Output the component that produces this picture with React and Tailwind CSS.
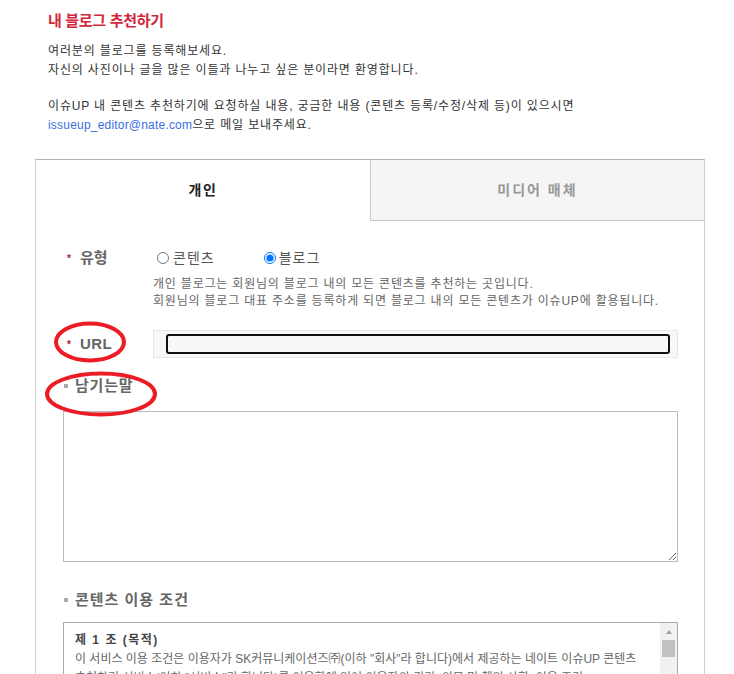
import React from 'react';

const font = { fontFamily: '"Liberation Sans", "Noto Sans CJK KR", sans-serif' };

const App = () => {
  return (
    <div className="relative w-[734px] h-[674px] overflow-hidden bg-white" style={font}>
      <div className="ml-[35px] w-[670px]">
        {/* INTRO */}
        <div className="pl-[13px] pt-[10px]">
          <h1 className="text-[15px] leading-[22px] font-bold text-[#d0283c] tracking-[-0.3px]">내 블로그 추천하기</h1>
          <div className="mt-[10px] text-[12px] leading-[18.5px] text-[#333] tracking-[0.85px]">
            <p>여러분의 블로그를 등록해보세요.</p>
            <p>자신의 사진이나 글을 많은 이들과 나누고 싶은 분이라면 환영합니다.</p>
            <p className="mt-[18px]">이슈UP 내 콘텐츠 추천하기에 요청하실 내용, 궁금한 내용 (콘텐츠 등록/수정/삭제 등)이 있으시면</p>
            <p><a className="text-[#3b6fe0] tracking-[0.2px]">issueup_editor@nate.com</a>으로 메일 보내주세요.</p>
          </div>
        </div>

        {/* FORM BOX */}
        <div className="mt-[25px] border border-[#cfcfcf] border-t-[#b4b4b4] h-[600px]">
          <div className="grid grid-cols-2 h-[61px]">
            <div className="flex items-center justify-center text-[14px] font-bold text-[#222] tracking-[1.5px]">개인</div>
            <div className="flex items-center justify-center bg-[#f5f5f5] border-l border-b border-[#c8c8c8] text-[14px] font-bold text-[#999] tracking-[2px]">미디어 매체</div>
          </div>

          <div className="pl-[27px] pr-[26px]">
            {/* TYPE */}
            <div className="flex items-center mt-[27px] h-[20px]">
              <div className="w-[94px] pl-[4px] text-[15px] font-bold text-[#666]"><span className="text-[#b0202c] text-[10px] mr-[9px] align-middle">*</span>유형</div>
              <label className="flex items-center text-[14px] text-[#555] tracking-[1px]">
                <input type="radio" name="kind" className="w-[12px] h-[12px] m-0 mr-[4px]" />콘텐츠
              </label>
              <label className="flex items-center text-[14px] text-[#555] tracking-[1px] ml-[49px]">
                <input type="radio" name="kind" defaultChecked className="w-[12px] h-[12px] m-0 mr-[3px]" />블로그
              </label>
            </div>
            <div className="ml-[90px] mt-[8px] text-[12px] leading-[17px] text-[#666] tracking-[0.8px]">
              <p>개인 블로그는 회원님의 블로그 내의 모든 콘텐츠를 추천하는 곳입니다.</p>
              <p className="whitespace-nowrap">회원님의 블로그 대표 주소를 등록하게 되면 블로그 내의 모든 콘텐츠가 이슈UP에 활용됩니다.</p>
            </div>

            {/* URL */}
            <div className="flex items-center mt-[20px]">
              <div className="w-[90px] pl-[4px] text-[15px] font-bold text-[#666]"><span className="text-[#b0202c] text-[10px] mr-[9px] align-middle">*</span><span className="tracking-[0.5px]">URL</span></div>
              <div className="w-[528px] h-[28px] bg-[#f8f8f8] border border-[#e6e6e6] flex items-center pl-[12px] pr-[7px]">
                <div className="w-full h-[20px] border-2 border-[#111] rounded-[3px] bg-[#f8f8f8]"></div>
              </div>
            </div>

            {/* MESSAGE */}
            <div className="mt-[18px] text-[15px] font-bold text-[#666] flex items-center h-[20px] tracking-[0.8px]">
              <span className="inline-block w-[4px] h-[4px] bg-[#aaa] ml-[1px] mr-[7px]"></span>남기는말
            </div>
            <textarea className="block mt-[15px] w-[615px] h-[151px] border border-[#bbb] bg-white outline-none"></textarea>

            {/* TERMS */}
            <div className="mt-[28px] text-[15px] font-bold text-[#666] flex items-center h-[20px] tracking-[1px]">
              <span className="inline-block w-[4px] h-[4px] bg-[#aaa] ml-[1px] mr-[7px]"></span>콘텐츠 이용 조건
            </div>
            <div className="mt-[12px] w-[615px] h-[150px] border border-[#aaa] flex">
              <div className="flex-1 pl-[11px] pt-[8px] text-[12px] leading-[19px] text-[#666] overflow-hidden">
                <p className="font-bold text-[#444] tracking-[1.5px]">제 1 조 (목적)</p>
                <p className="whitespace-nowrap">이 서비스 이용 조건은 이용자가 SK커뮤니케이션즈㈜(이하 "회사"라 합니다)에서 제공하는 네이트 이슈UP 콘텐츠</p>
                <p className="whitespace-nowrap">추천하기 서비스(이하 "서비스"라 합니다)를 이용함에 있어 이용자의 권리, 의무 및 책임 사항, 이용 조건</p>
              </div>
              <div className="w-[17px] bg-[#f1f1f1] flex flex-col items-center">
                <div className="h-[17px] flex items-center justify-center">
                  <div className="w-0 h-0 border-l-[3px] border-r-[3px] border-b-[4px] border-l-transparent border-r-transparent border-b-[#a3a3a3]"></div>
                </div>
                <div className="w-[13px] h-[17px] bg-[#c1c1c1]"></div>
              </div>
            </div>
          </div>
        </div>
      </div>

      {/* RED MARKS */}
      <svg className="absolute top-0 left-0 pointer-events-none" width="734" height="674">
        <ellipse cx="90" cy="342" rx="34" ry="18.5" fill="none" stroke="#ec1c24" strokeWidth="4" />
        <ellipse cx="101" cy="394" rx="54" ry="20.5" fill="none" stroke="#ec1c24" strokeWidth="4" />
      </svg>
    </div>
  );
};

export default App;
